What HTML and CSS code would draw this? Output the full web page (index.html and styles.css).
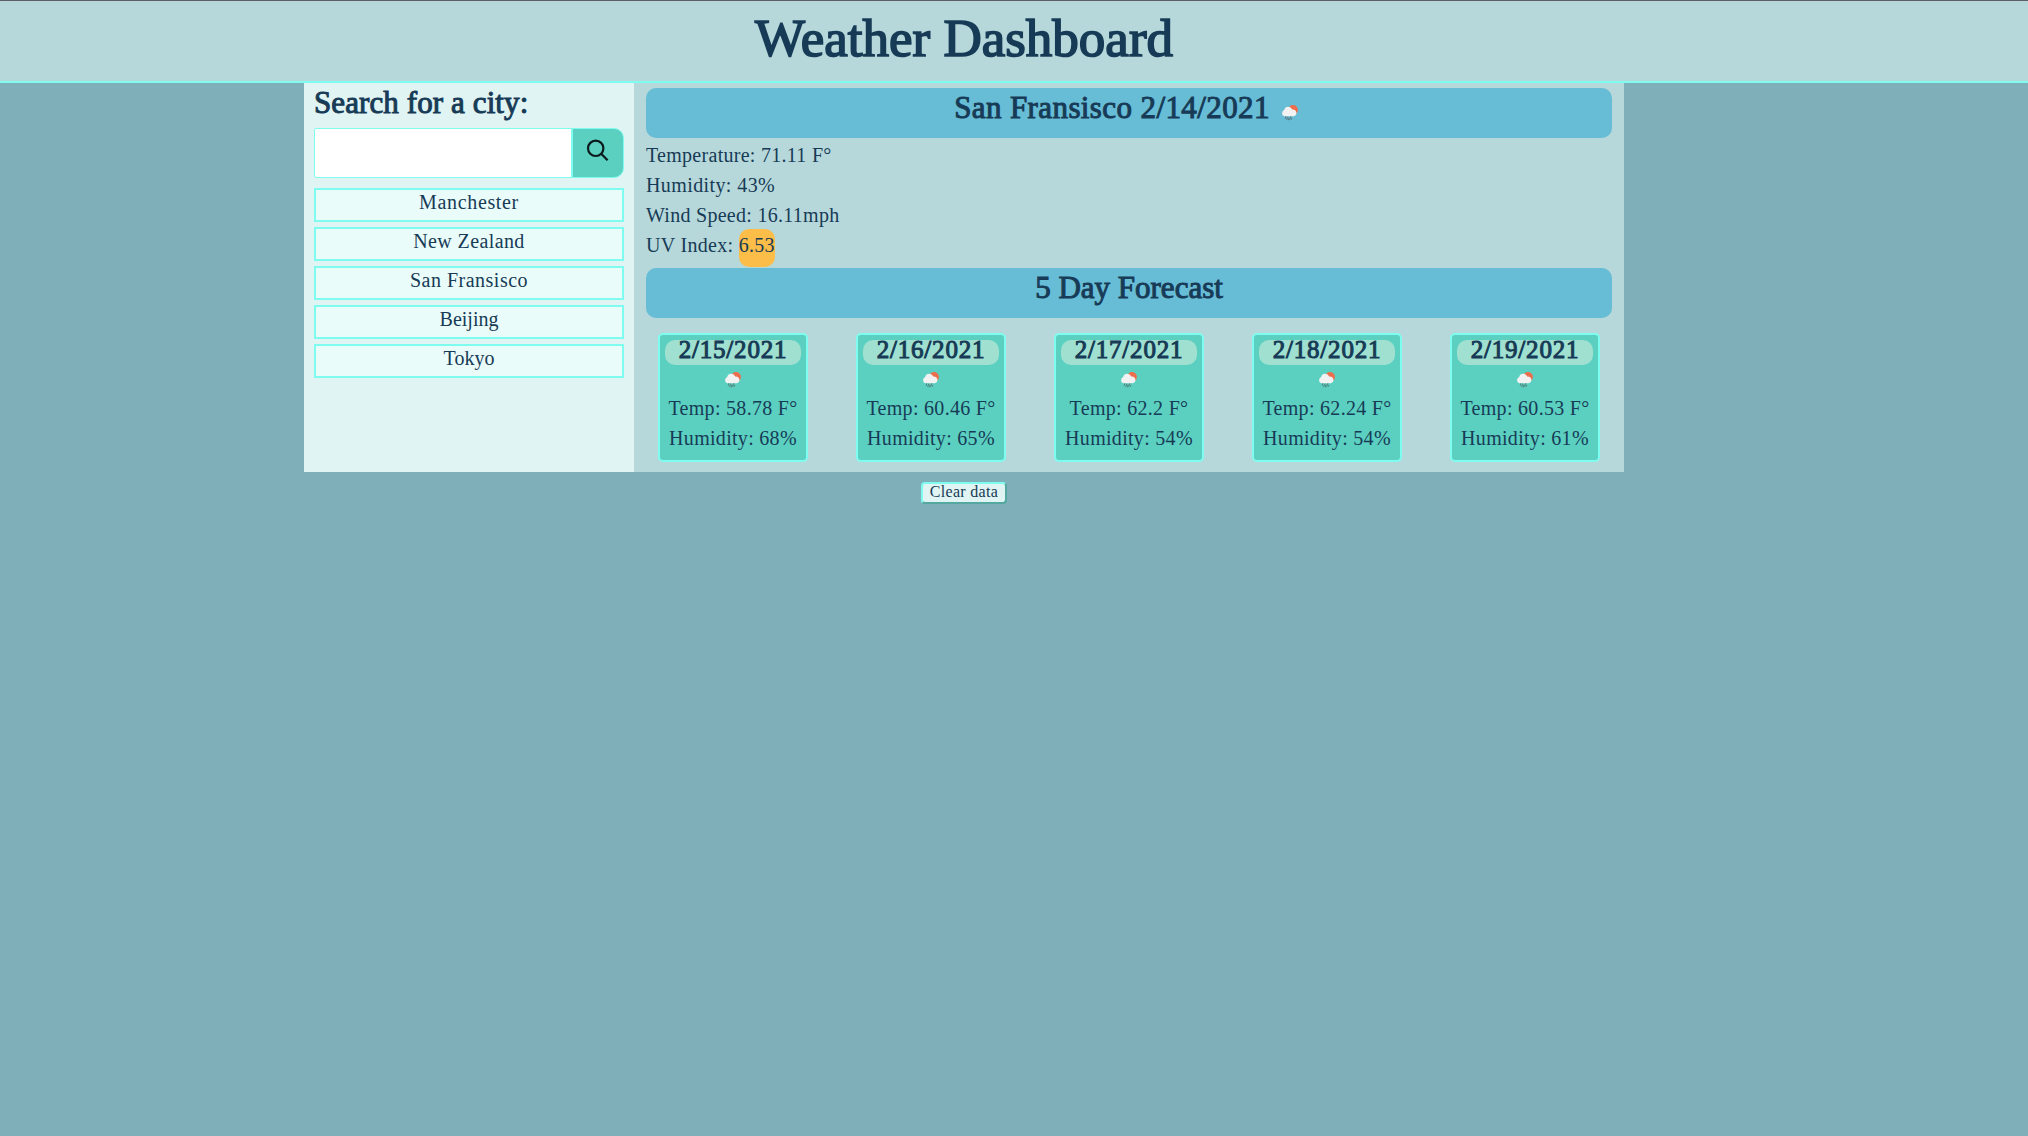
FILE: index.html
```html
<!DOCTYPE html>
<html lang="en">
<head>
<meta charset="utf-8">
<title>Weather Dashboard</title>
<link rel="stylesheet" href="styles.css">
</head>
<body>
<svg class="sprite" width="0" height="0" aria-hidden="true">
  <symbol id="rain" viewBox="0 0 17 16">
    <circle cx="12" cy="4.9" r="4.9" fill="#ec6e4c"/>
    <path d="M3.3 11.2A3.3 3.3 0 0 1 3.2 5 4.2 4.2 0 0 1 11.2 4.6 3.3 3.3 0 0 1 12.8 11.2Z" fill="#f2f2f2"/>
    <path d="M4.8 11.2l-.6 2.6M6.8 11.6l-1.2 3.4M8 12.6l-.8 2.8M9.9 11.2l-1.4 3.6M10.8 12.8l-.6 2" stroke="#48484a" stroke-opacity=".7" stroke-width=".8" fill="none"/>
  </symbol>
</svg>
<header class="header"><h1>Weather Dashboard</h1></header>
<main class="dashboard">
  <aside class="sidebar">
    <h2>Search for a city:</h2>
    <form class="search">
      <input type="text" aria-label="City">
      <button type="button" aria-label="Search"><svg width="24" height="24" viewBox="0 0 24 24" fill="none" stroke="#0b1a1c" stroke-width="2.2"><circle cx="9.7" cy="9.3" r="7.7"/><path d="M15.2 14.8l6.4 6.4"/></svg></button>
    </form>
    <ul class="cities">
      <li>Manchester</li>
      <li>New Zealand</li>
      <li>San Fransisco</li>
      <li>Beijing</li>
      <li>Tokyo</li>
    </ul>
  </aside>
  <section class="weather">
    <h2 class="bar bar-city"><span>San Fransisco 2/14/2021</span><svg class="icon" width="17" height="16"><use href="#rain"/></svg></h2>
    <div class="details">
      <p class="temperature">Temperature: 71.11 F°</p>
      <p class="humidity">Humidity: 43%</p>
      <p class="wind">Wind Speed: 16.11mph</p>
      <p class="uv">UV Index: <span class="uv-value">6.53</span></p>
    </div>
    <h2 class="bar">5 Day Forecast</h2>
    <div class="forecast">
      <article class="card"><h3>2/15/2021</h3><svg class="icon" width="17" height="16"><use href="#rain"/></svg><p>Temp: 58.78 F°</p><p>Humidity: 68%</p></article>
      <article class="card"><h3>2/16/2021</h3><svg class="icon" width="17" height="16"><use href="#rain"/></svg><p>Temp: 60.46 F°</p><p>Humidity: 65%</p></article>
      <article class="card"><h3>2/17/2021</h3><svg class="icon" width="17" height="16"><use href="#rain"/></svg><p>Temp: 62.2 F°</p><p>Humidity: 54%</p></article>
      <article class="card"><h3>2/18/2021</h3><svg class="icon" width="17" height="16"><use href="#rain"/></svg><p>Temp: 62.24 F°</p><p>Humidity: 54%</p></article>
      <article class="card"><h3>2/19/2021</h3><svg class="icon" width="17" height="16"><use href="#rain"/></svg><p>Temp: 60.53 F°</p><p>Humidity: 61%</p></article>
    </div>
  </section>
</main>
<div class="actions"><button class="clear" type="button">Clear data</button></div>
</body>
</html>
```
FILE: styles.css
```css
* { box-sizing: border-box; }
body {
  margin: 0;
  min-height: 1136px;
  background: #7fb0ba;
  color: #173b56;
  font: 20px/30px "Liberation Serif", serif;
}
h1, h2, h3, p, ul { margin: 0; padding: 0; }
h1, h2, h3 { font-weight: 400; }
.sprite { position: absolute; }

.header {
  height: 83px;
  padding: 7px 100px 0 0;
  border-top: 1px solid #5d5d66;
  border-bottom: 2px solid #7ffcf0;
  background: #b6d8da;
  text-align: center;
}
h1 { font-size: 53px; line-height: 60px; -webkit-text-stroke: 1.7px #173b56; }

.dashboard {
  display: grid;
  grid-template-columns: 330px 990px;
  width: 1320px;
  height: 389px;
  margin-left: 304px;
}
.sidebar { padding: 0 10px; background: #e0f4f3; }
h2 { font-size: 31px; line-height: 39px; white-space: nowrap; -webkit-text-stroke: 1px #173b56; }
.sidebar h2 { height: 45px; letter-spacing: .1px; }

.search { display: flex; height: 50px; }
.search input {
  width: 258px;
  height: 50px;
  border: 1px solid #7ffcf0;
  border-radius: 2px 0 0 2px;
  background: #fff;
}
.search button {
  display: flex;
  justify-content: center;
  width: 52px;
  height: 50px;
  padding: 10px 0 0;
  border: 1px solid #7ffcf0;
  border-radius: 0 10px 10px 0;
  background: #5bd0c1;
}

.cities {
  display: grid;
  gap: 5px;
  margin-top: 10px;
  list-style: none;
}
.cities li {
  height: 34px;
  border: 2px solid #7ffcf0;
  background: #e9fcfa;
  line-height: 25px;
  text-align: center;
}
.cities li:nth-child(1) { letter-spacing: .65px; }
.cities li:nth-child(2) { letter-spacing: .4px; }
.cities li:nth-child(3) { letter-spacing: .5px; }

.weather { padding-top: 5px; background: #b6d8da; }
.bar {
  display: flex;
  justify-content: center;
  height: 50px;
  margin: 0 12px;
  border-radius: 10px;
  background: #67bcd6;
}
.bar-city { padding-right: 6px; }
.bar-city span { letter-spacing: .4px; }
.bar-city .icon { margin: 17px 0 0 11px; }
.icon { -webkit-text-stroke: 0; }

.details { height: 130px; padding: 2px 12px 0; }
.details p { height: 30px; }
.temperature { letter-spacing: .28px; }
.humidity { letter-spacing: .4px; }
.wind { letter-spacing: .28px; }
.uv { letter-spacing: .3px; }
.uv-value {
  display: inline-block;
  width: 36px;
  height: 38px;
  margin-top: -2px;
  padding-top: 1px;
  border-radius: 10px;
  background: #fdbd49;
  text-align: center;
}

.forecast {
  display: grid;
  grid-template-columns: repeat(5, 198px);
  justify-items: center;
  padding-top: 15px;
}
.card {
  display: flex;
  flex-direction: column;
  align-items: center;
  width: 150px;
  height: 129px;
  padding-top: 5px;
  border: 2px solid #7ffcf0;
  border-radius: 5px;
  background: #5bd0c1;
}
.card h3 {
  width: 136px;
  height: 25px;
  border-radius: 10px;
  background: #9fe0d0;
  font-size: 25px;
  line-height: 19px;
  letter-spacing: .8px;
  text-align: center;
  -webkit-text-stroke: 1px #173b56;
}
.card .icon { margin: 7px 1px 5px 0; }
.card p { letter-spacing: .3px; white-space: nowrap; }

.actions { display: flex; justify-content: center; padding: 10px 100px 0 0; }
.clear {
  width: 86px;
  height: 22px;
  padding: 0 0 2px;
  border: 2px outset #7ffcf0;
  border-radius: 4px;
  background: #e0f4f3;
  color: #173b56;
  font: 16px/16px "Liberation Serif", serif;
  letter-spacing: .3px;
}
```
